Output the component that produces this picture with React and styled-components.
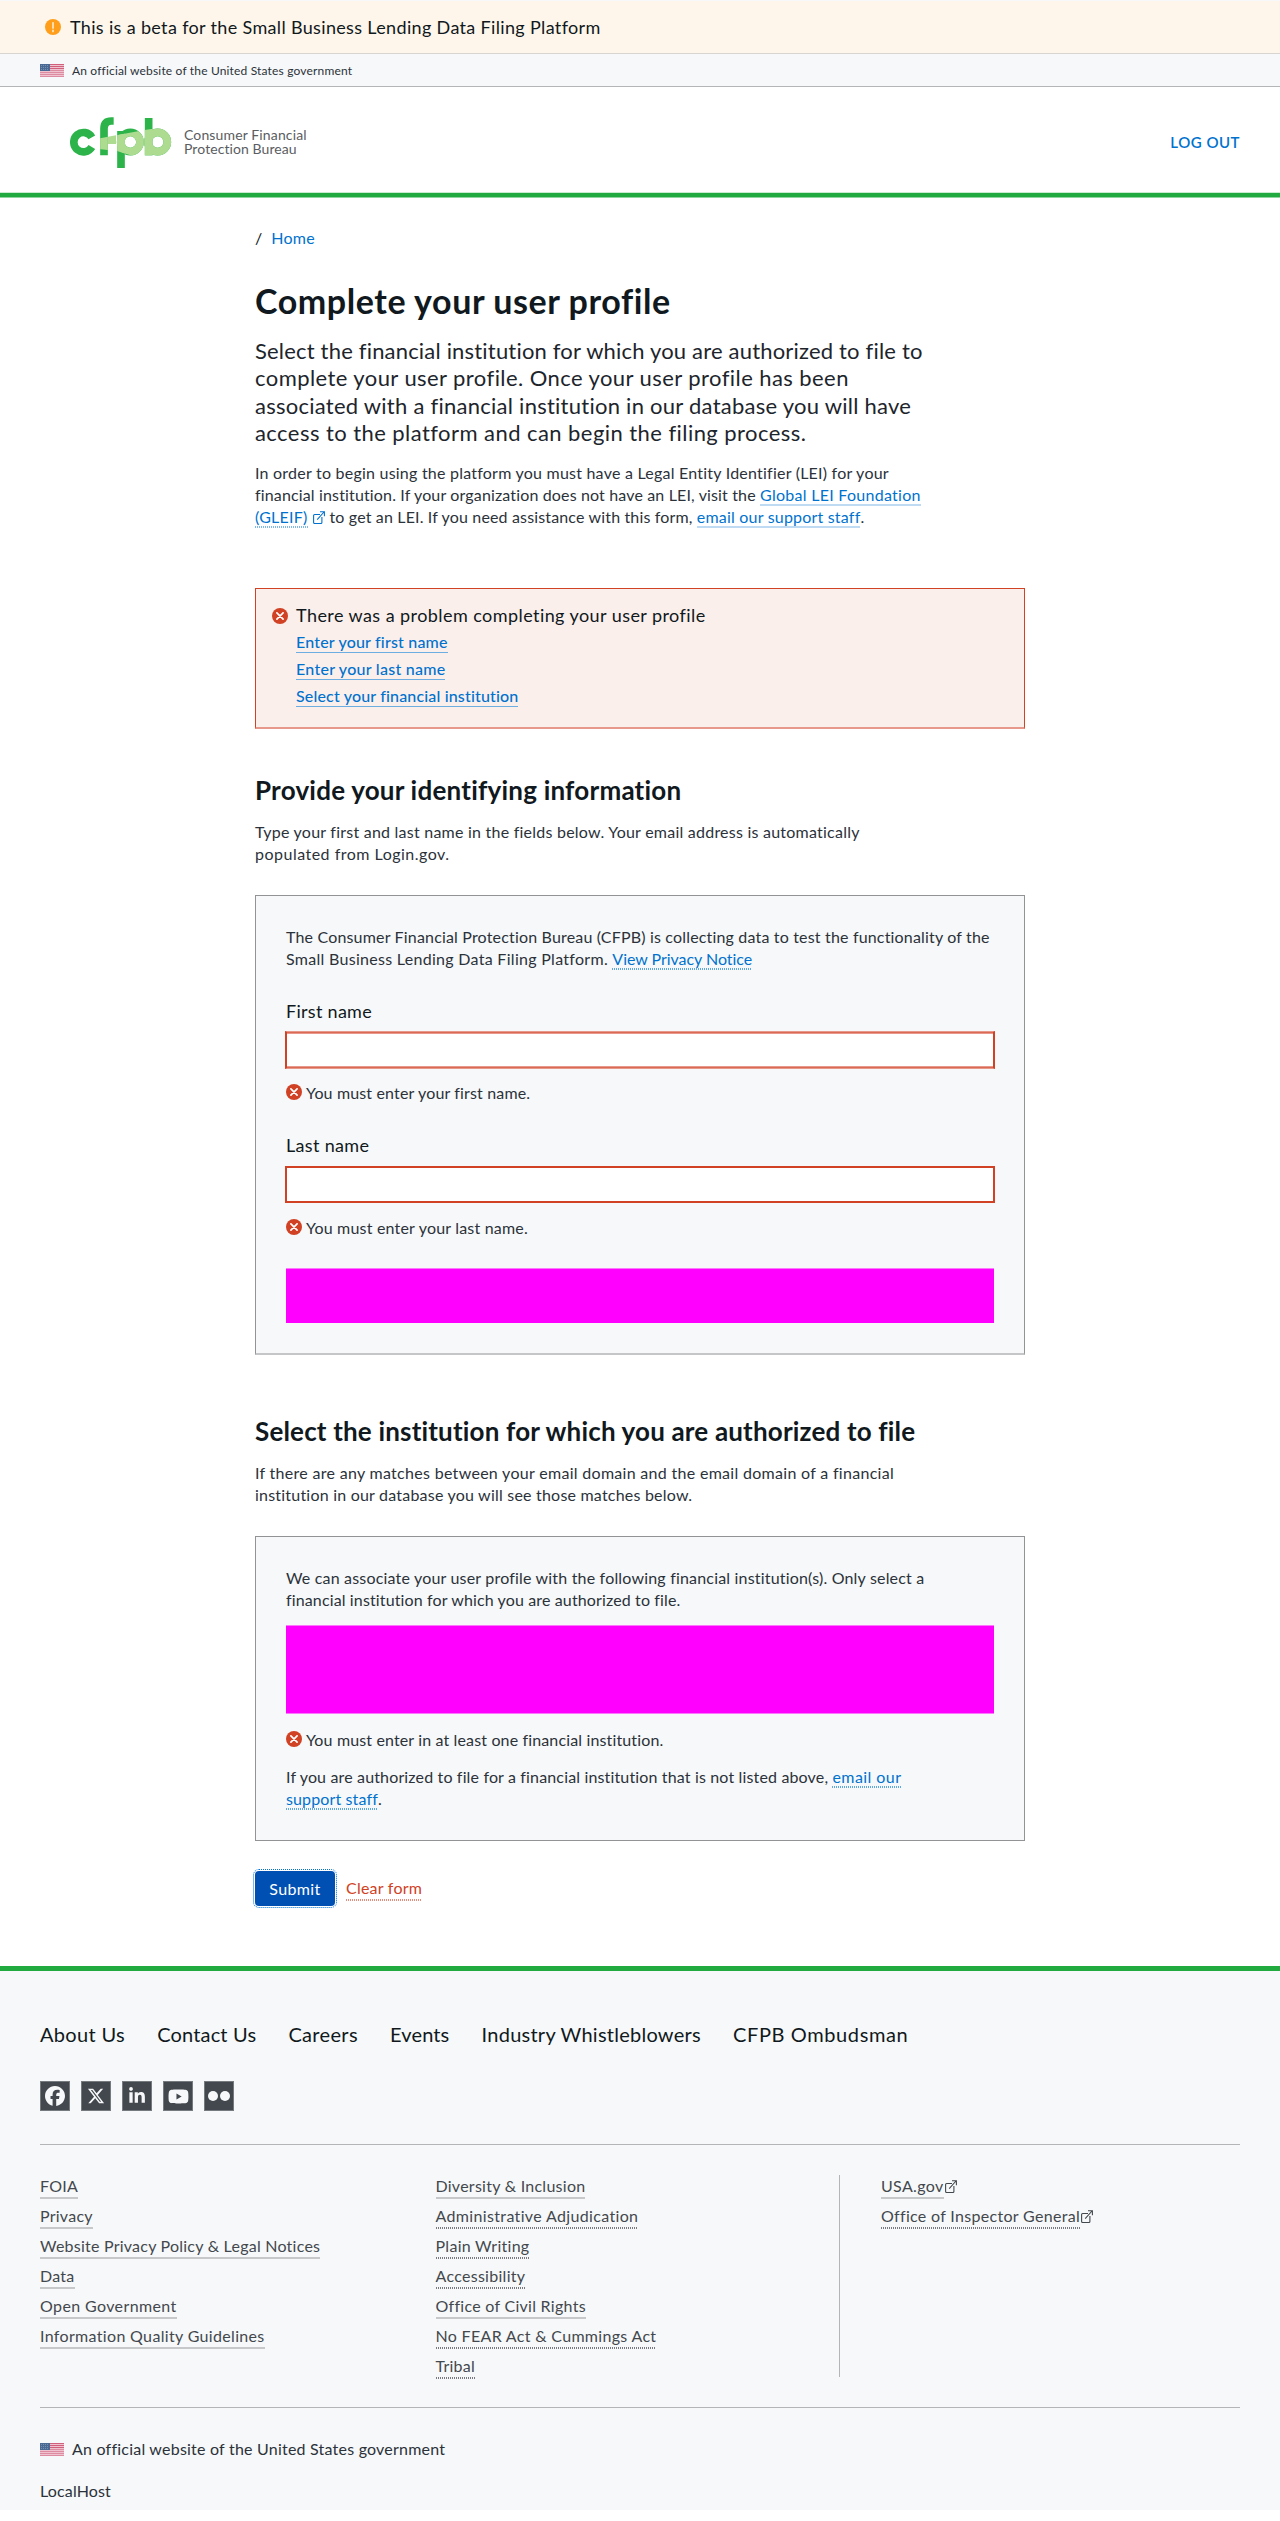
import React from "react";
import styled, { createGlobalStyle, css } from "styled-components";
import { FaFacebook, FaLinkedinIn, FaYoutube, FaXTwitter } from "react-icons/fa6";

const color = {
  ink: "#101820",
  text: "#2b323a",
  gray: "#43484e",
  line: "#b4b5b6",
  panel: "#f7f8f9",
  panelBorder: "#919395",
  green: "#20aa3f",
  red: "#d14124",
  redSoft: "#e8988a",
  blue: "#0072ce",
  blueSoft: "#bfdbf3",
};

const GlobalStyle = createGlobalStyle`
  *, *::before, *::after { box-sizing: border-box; }
  body {
    margin: 0;
    background: #fff;
    color: ${color.ink};
    font-family: Lato, "Liberation Sans", sans-serif;
    font-size: 16px;
    line-height: 22px;
  }
`;

/* A run of text with its own tracking; block runs hold one line each. */
const Track = styled.span`
  letter-spacing: ${(p) => p.$ls}px;
  white-space: pre;
  ${(p) => p.$line && "display: block;"}
`;

const underlines = {
  solid: (c) => css`background-image: linear-gradient(${c}, ${c});`,
  dotted: (c) => css`background-image: repeating-linear-gradient(90deg, ${c} 0 1px, transparent 1px 2px);`,
};

const Link = styled.a`
  color: ${(p) => p.$color || color.blue};
  letter-spacing: ${(p) => p.$ls || 0}px;
  white-space: pre;
  text-decoration: none;
  padding-bottom: 2px;
  background-position: 0 100%;
  background-size: 100% ${(p) => p.$thick || 2}px;
  background-repeat: no-repeat;
  ${(p) => underlines[p.$dotted ? "dotted" : "solid"](p.$under || color.blueSoft)}
`;

/* Header */
const Banner = styled.div`
  height: 54px;
  padding-left: 45px;
  display: flex;
  align-items: center;
  gap: 9px;
  background: #fff6eb;
  border-top: 1px solid ${color.panel};
  border-bottom: 1px solid #d8d5d0;
  font-size: 18px;
`;

const GovBar = styled.div`
  display: flex;
  align-items: center;
  gap: 8px;
  color: ${color.text};
  font-size: ${(p) => (p.$small ? 12 : 16)}px;
  ${(p) =>
    p.$small &&
    css`
      height: 33px;
      padding: 1px 40px 0;
      background: ${color.panel};
      border-bottom: 1px solid ${color.line};
    `}
`;

const FlagSvg = styled.svg`
  display: block;
  margin-bottom: ${(p) => p.$lift || 0}px;
`;

const Header = styled.header`
  height: 105px;
  padding: 0 40px 0 70px;
  display: flex;
  align-items: center;
  justify-content: space-between;
`;

const Brand = styled.div`
  display: flex;
  align-items: flex-start;
  gap: 11px;
  margin-top: 8px;
`;

const BrandName = styled.div`
  padding-top: 11px;
  color: #5a5d61;
  font-size: 14px;
  line-height: 14.4px;
`;

const LogOut = styled.a`
  margin-top: 4px;
  color: ${color.blue};
  font-size: 15px;
  font-weight: 600;
  letter-spacing: 0.5px;
`;

const HeaderRule = styled.div`
  height: 6px;
  background: linear-gradient(#c9ebd0 0 1px, ${color.green} 1px 5px, #90d49f 5px);
`;

/* Main column */
const Main = styled.main`
  width: 770px;
  margin: 0 auto;
  padding: 29px 0 60px;
`;

const Breadcrumb = styled.nav`
  display: flex;
  gap: 9px;
`;

const CrumbLink = styled.a`
  color: ${color.blue};
  letter-spacing: 0.26px;
`;

const PageTitle = styled.h1`
  margin: 32px 0 16px;
  font-size: 34px;
  line-height: 40px;
  font-weight: 700;
`;

const Lead = styled.p`
  height: 110px;
  margin: 0 0 15px;
  color: #1d252c;
  font-size: 22px;
  line-height: 27.4px;
`;

const Paragraph = styled.p`
  margin: ${(p) => p.$top || 0}px 0 0;
  color: ${color.text};
`;

const Line = styled.span`
  display: block;
  white-space: pre;
`;

const SectionTitle = styled.h2`
  margin: ${(p) => p.$top}px 0 ${(p) => p.$bottom}px;
  font-size: 26px;
  line-height: 32px;
  font-weight: 700;
`;

const Alert = styled.section`
  height: 141px;
  margin-top: 60px;
  padding: 15px 16px 0;
  display: flex;
  gap: 8px;
  background: #fbefec;
  border: 1px solid ${color.red};
  border-bottom: 2px solid ${color.redSoft};
`;

const AlertIcon = styled.div`
  padding-top: 3px;
`;

const AlertTitle = styled.div`
  font-size: 18px;
  margin-bottom: 2px;
`;

const AlertItem = styled.div`
  font-weight: 500;
  line-height: 27px;
`;

const Panel = styled.section`
  height: ${(p) => p.$height}px;
  margin-top: 30px;
  padding: 30px 30px 0;
  background: ${color.panel};
  border: 1px solid ${color.panelBorder};
  ${(p) => p.$softBottom && "border-bottom: 2px solid #c4c6c7;"}
`;

const Label = styled.label`
  display: block;
  margin-top: 30px;
  font-size: 18px;
`;

const Input = styled.input`
  display: block;
  width: 710px;
  height: ${(p) => p.$height}px;
  margin: ${(p) => p.$top}px -1px 0;
  padding: 0 10px;
  background: #fff;
  border: 2px solid ${color.red};
  border-radius: 0;
  ${(p) =>
    p.$soft &&
    css`
      border-top: 1px solid ${color.redSoft};
      border-bottom: 1px solid ${color.redSoft};
      box-shadow: inset 0 1px #da6a53, inset 0 -1px #da6a53, inset 0 2px ${color.redSoft},
        inset 0 -2px ${color.redSoft};
    `}
`;

const FieldError = styled.div`
  margin-top: ${(p) => p.$top}px;
  display: flex;
  gap: 4px;
  color: ${color.text};
`;

const ErrorIcon = styled.span`
  height: 16px;
  margin-top: 1px;
  line-height: 0;
  padding-top: 1px;
`;

const Redacted = styled.div`
  height: ${(p) => p.$height}px;
  margin-top: ${(p) => p.$top}px;
  background: #f0f;
  border-top: 1px solid #fb78fb;
  ${(p) => p.$softBottom && "border-bottom: 1px solid #fb78fb;"}
`;

const Actions = styled.div`
  margin-top: 30px;
  display: flex;
  align-items: center;
  gap: 11px;
`;

const Submit = styled.button`
  width: 80px;
  height: 35px;
  padding: 0;
  border: 0;
  border-radius: 4px;
  background: #0050b4;
  outline: 1px dotted ${color.blue};
  outline-offset: 1px;
  color: #fff;
  font: 400 16px/22px Lato, sans-serif;
  letter-spacing: 0.39px;
`;

/* Footer */
const Footer = styled.footer`
  height: 544px;
  padding: 50px 40px 0;
  background: ${color.panel};
  border-top: 5px solid ${color.green};
`;

const FooterNav = styled.nav`
  display: flex;
  gap: 32.2px;
  font-size: 20px;
  line-height: 26px;
`;

const Social = styled.div`
  margin: 34px 0 33px;
  display: flex;
  gap: 11px;
`;

const SocialTile = styled.a`
  width: 30px;
  height: 30px;
  display: flex;
  align-items: center;
  justify-content: center;
  background: #43484e;
  border: 1px solid #757a7f;
  color: ${color.panel};
`;

const FooterColumns = styled.div`
  padding: 30px 0;
  display: grid;
  grid-template-columns: 395.5px 403.5px 1fr;
  border-top: 1px solid ${color.line};
  border-bottom: 1px solid ${color.line};
`;

const FooterList = styled.div`
  display: flex;
  flex-direction: column;
  gap: 8px;
  ${(p) => p.$divided && `padding-left: 41px; border-left: 1px solid ${color.line};`}
`;

const FooterItem = styled.div`
  height: 22px;
  display: flex;
  align-items: flex-start;
  gap: 1px;
`;

const FooterMeta = styled.div`
  padding-top: 30px;
  display: flex;
  flex-direction: column;
  gap: 20px;
  color: ${color.text};
`;

const InlineIcon = styled.svg`
  display: inline-block;
  vertical-align: -1px;
  margin: 0 ${(p) => p.$side || 0}px;
`;

const CircleIcon = ({ kind }) => (
  <svg width="16" height="16" viewBox="0 0 16 16">
    <circle cx="8" cy="8" r="8" fill={kind === "warning" ? "#ff9e1b" : color.red} />
    {kind === "warning" ? (
      <path d="M8 3.6v5.6M8 11.2v1.5" stroke="#fff" strokeWidth="1.3" strokeLinecap="round" />
    ) : (
      <path d="M4.9 4.9l6.2 6.2M11.1 4.9l-6.2 6.2" stroke="#fff" strokeWidth="1.7" strokeLinecap="round" />
    )}
  </svg>
);

const External = ({ side }) => (
  <InlineIcon $side={side} width="12" height="13" viewBox="0 0 12 13" fill="none" stroke="currentColor" strokeWidth="1.1">
    <path d="M7 3.5H1.6a1 1 0 0 0-1 1v7a1 1 0 0 0 1 1h6.3a1 1 0 0 0 1-1V6" />
    <path d="M4.2 8.6L11 1M7 .7h4.4v4.6" />
  </InlineIcon>
);

const Flag = ({ lift }) => (
  <FlagSvg $lift={lift} width="24" height="13" viewBox="0 0 24 13">
    <rect width="24" height="13" fill="#eec3cf" />
    {[0, 2, 4, 6, 8, 10, 12].map((y) => (
      <rect key={y} y={y} width="24" height="1" fill={y < 6 ? "#d0607c" : "#dc8ba1"} />
    ))}
    <rect width="10" height="7" fill="#4a6a94" />
    {[1, 3, 5].map((y) => (
      <path key={y} d={`M1 ${y + 0.5}h8`} stroke="#8ba1bd" strokeWidth=".7" strokeDasharray="1 1" />
    ))}
  </FlagSvg>
);

const LogoShapes = ({ fill }) => (
  <g stroke={fill} fill="none" strokeWidth="23">
    <path d="M114 130V50q0-23 22-23h7" />
    <circle cx="193" cy="90" r="29" />
    <path d="M165 57V168" />
    <circle cx="275" cy="90" r="29" />
    <path d="M248 18V130" />
  </g>
);

const Logo = () => (
  <svg width="103" height="54" viewBox="12 15 309 162">
    <clipPath id="band">
      <path d="M90 81L236 54L330 40V140H226L153 117L90 110Z" />
    </clipPath>
    <path d="M77.500 76A29 29 0 1 0 77.500 105" fill="none" stroke="#2cb34a" strokeWidth="23" />
    <LogoShapes fill="#2cb34a" />
    <path d="M126 74L150 70V96H126Z" fill="#addc91" />
    <g clipPath="url(#band)">
      <LogoShapes fill="#addc91" />
    </g>
  </svg>
);

const Lines = ({ rows }) => rows.map(([text, ls]) => (
  <Track key={text} $line $ls={ls}>{text}</Track>
));

const leadLines = [
  ["Select the financial institution for which you are authorized to file to", 0.186],
  ["complete your user profile. Once your user profile has been", 0.426],
  ["associated with a financial institution in our database you will have", 0.256],
  ["access to the platform and can begin the filing process.", 0.439],
];

const problems = [
  ["Enter your first name", 0.19],
  ["Enter your last name", 0.263],
  ["Select your financial institution", 0.166],
];

const navLinks = [
  ["About Us", 0.329],
  ["Contact Us", 0.164],
  ["Careers", 0.333],
  ["Events", 0.127],
  ["Industry Whistleblowers", 0.248],
  ["CFPB Ombudsman", 0.611],
];

const columnOne = [
  ["FOIA", 0.234],
  ["Privacy", 0.25],
  ["Website Privacy Policy & Legal Notices", 0.234],
  ["Data", 0.25],
  ["Open Government", 0.38],
  ["Information Quality Guidelines", 0.335],
];

const columnTwo = [
  ["Diversity & Inclusion", 0.26],
  ["Administrative Adjudication", 0.35, true],
  ["Plain Writing", 0.28, true],
  ["Accessibility", 0.28, true],
  ["Office of Civil Rights", 0.28],
  ["No FEAR Act & Cummings Act", 0.313, true],
  ["Tribal", 0.25, true],
];

const columnThree = [
  ["USA.gov", 0.35],
  ["Office of Inspector General", 0.312, true],
];

const MarkBox = styled.span`
  line-height: 16px;
  padding-top: 3px;
  color: ${color.gray};
`;

const FooterLinks = ({ items, divided }) => (
  <FooterList $divided={divided}>
    {items.map(([text, ls, dotted]) => (
      <FooterItem key={text}>
        <Link $color={color.gray} $ls={ls} $dotted={dotted} $under={dotted ? "#777b80" : "#c6c8ca"}>{text}</Link>
        {divided && <MarkBox><External /></MarkBox>}
      </FooterItem>
    ))}
  </FooterList>
);

export default function App() {
  return (
    <>
      <GlobalStyle />
      <Banner>
        <CircleIcon kind="warning" />
        <Track $ls={0.34}>This is a beta for the Small Business Lending Data Filing Platform</Track>
      </Banner>
      <GovBar $small>
        <Flag lift={1} />
        <Track $ls={0.168}>An official website of the United States government</Track>
      </GovBar>
      <Header>
        <Brand>
          <Logo />
          <BrandName>
            <Lines rows={[["Consumer Financial", 0.136], ["Protection Bureau", 0.083]]} />
          </BrandName>
        </Brand>
        <LogOut>LOG OUT</LogOut>
      </Header>
      <HeaderRule />

      <Main>
        <Breadcrumb>
          <span>/</span>
          <CrumbLink>Home</CrumbLink>
        </Breadcrumb>
        <PageTitle>
          <Track $ls={0.569}>Complete your user profile</Track>
        </PageTitle>
        <Lead>
          <Lines rows={leadLines} />
        </Lead>
        <Paragraph>
          <Track $line $ls={0.227}>
            In order to begin using the platform you must have a Legal Entity Identifier (LEI) for your
          </Track>
          <Line>
            <Track $ls={0.146}>{"financial institution. If your organization does not have an LEI, visit the "}</Track>
            <Link $ls={0.276}>Global LEI Foundation</Link>
          </Line>
          <Line>
            <Link $ls={0.232} $dotted $under="#7fb8e6">(GLEIF)</Link>
            <Link as="span" $under="transparent"><External side={5} /></Link>
            <Track $ls={0.153}>{"to get an LEI. If you need assistance with this form, "}</Track>
            <Link $ls={0.198}>email our support staff</Link>.
          </Line>
        </Paragraph>

        <Alert>
          <AlertIcon>
            <CircleIcon kind="error" />
          </AlertIcon>
          <div>
            <AlertTitle>
              <Track $ls={0.43}>There was a problem completing your user profile</Track>
            </AlertTitle>
            {problems.map(([text, ls]) => (
              <AlertItem key={text}>
                <Link $ls={ls} $thick={1} $under="#6caee2">{text}</Link>
              </AlertItem>
            ))}
          </div>
        </Alert>

        <SectionTitle $top={45} $bottom={15}>
          <Track $ls={0.222}>Provide your identifying information</Track>
        </SectionTitle>
        <Paragraph>
          <Lines
            rows={[
              ["Type your first and last name in the fields below. Your email address is automatically", 0.232],
              ["populated from Login.gov.", 0.49],
            ]}
          />
        </Paragraph>

        <Panel $height={460} $softBottom>
          <Paragraph>
            <Track $line $ls={0.173}>
              The Consumer Financial Protection Bureau (CFPB) is collecting data to test the functionality of the
            </Track>
            <Line>
              <Track $ls={0.292}>{"Small Business Lending Data Filing Platform. "}</Track>
              <Link $ls={-0.039} $dotted $under="#5fa6df">View Privacy Notice</Link>
            </Line>
          </Paragraph>
          <Label htmlFor="first"><Track $ls={0.288}>First name</Track></Label>
          <Input id="first" $top={9} $height={38} $soft />
          <FieldError $top={13}>
            <ErrorIcon><CircleIcon /></ErrorIcon>
            <Track $ls={0.149}>You must enter your first name.</Track>
          </FieldError>
          <Label htmlFor="last"><Track $ls={0.317}>Last name</Track></Label>
          <Input id="last" $top={10} $height={37} />
          <FieldError $top={14}>
            <ErrorIcon><CircleIcon /></ErrorIcon>
            <Track $ls={0.194}>You must enter your last name.</Track>
          </FieldError>
          <Redacted $top={29} $height={55} />
        </Panel>

        <SectionTitle $top={60} $bottom={15}>
          <Track $ls={0.173}>Select the institution for which you are authorized to file</Track>
        </SectionTitle>
        <Paragraph>
          <Lines
            rows={[
              ["If there are any matches between your email domain and the email domain of a financial", 0.299],
              ["institution in our database you will see those matches below.", 0.213],
            ]}
          />
        </Paragraph>

        <Panel $height={305}>
          <Paragraph>
            <Lines
              rows={[
                ["We can associate your user profile with the following financial institution(s). Only select a", 0.184],
                ["financial institution for which you are authorized to file.", 0.131],
              ]}
            />
          </Paragraph>
          <Redacted $top={14} $height={89} $softBottom />
          <FieldError $top={15}>
            <ErrorIcon><CircleIcon /></ErrorIcon>
            <Track $ls={0.139}>You must enter in at least one financial institution.</Track>
          </FieldError>
          <Paragraph $top={15}>
            <Line>
              <Track $ls={0.152}>
                {"If you are authorized to file for a financial institution that is not listed above, "}
              </Track>
              <Link $ls={0.435} $dotted $under="#5fa6df">email our</Link>
            </Line>
            <Line>
              <Link $ls={0.127} $dotted $under="#5fa6df">support staff</Link>.
            </Line>
          </Paragraph>
        </Panel>

        <Actions>
          <Submit>Submit</Submit>
          <Link $color={color.red} $ls={0.232} $dotted $under="#e08d7c">Clear form</Link>
        </Actions>
      </Main>

      <Footer>
        <FooterNav>
          {navLinks.map(([text, ls]) => (
            <Track key={text} $ls={ls}>{text}</Track>
          ))}
        </FooterNav>
        <Social>
          <SocialTile><FaFacebook size={20} /></SocialTile>
          <SocialTile><FaXTwitter size={18} /></SocialTile>
          <SocialTile><FaLinkedinIn size={18} /></SocialTile>
          <SocialTile><FaYoutube size={21} /></SocialTile>
          <SocialTile>
            <svg width="24" height="12" viewBox="0 0 24 12" fill="currentColor">
              <circle cx="6" cy="6" r="5" />
              <circle cx="18" cy="6" r="5" />
            </svg>
          </SocialTile>
        </Social>
        <FooterColumns>
          <FooterLinks items={columnOne} />
          <FooterLinks items={columnTwo} />
          <FooterLinks items={columnThree} divided />
        </FooterColumns>
        <FooterMeta>
          <GovBar>
            <Flag />
            <Track $ls={0.218}>An official website of the United States government</Track>
          </GovBar>
          <Track $ls={0.149}>LocalHost</Track>
        </FooterMeta>
      </Footer>
    </>
  );
}
